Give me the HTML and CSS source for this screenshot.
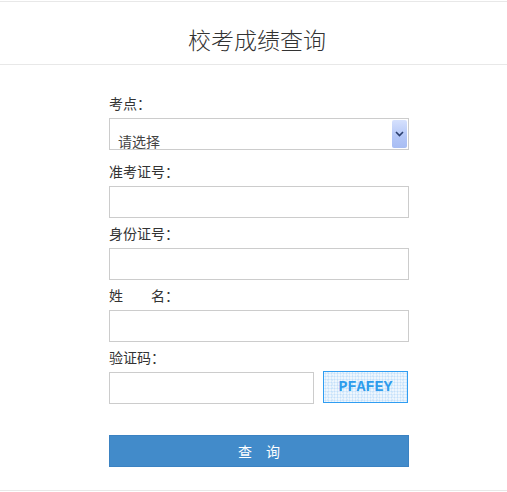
FILE: index.html
```html
<!DOCTYPE html>
<html lang="zh-CN">
<head>
<meta charset="utf-8">
<title>校考成绩查询</title>
<link rel="stylesheet" href="styles.css">
</head>
<body>
<div class="page">
  <header class="top">
    <h1 class="title">校考成绩查询</h1>
  </header>
  <form class="form">
    <label class="label">考点：</label>
    <div class="select-wrap">
      <select class="select"><option>请选择</option></select>
      <span class="select-btn">
        <svg width="9" height="6" viewBox="0 0 9 6"><path d="M1 1 L4.5 4.5 L8 1" fill="none" stroke="#2b3f6e" stroke-width="1.6"/></svg>
      </span>
    </div>
    <label class="label">准考证号：</label>
    <input class="input" type="text">
    <label class="label">身份证号：</label>
    <input class="input" type="text">
    <label class="label">姓　　名：</label>
    <input class="input" type="text">
    <label class="label">验证码：</label>
    <div class="captcha-row">
      <input class="input input-captcha" type="text">
      <div class="captcha">PFAFEY</div>
    </div>
    <button class="submit" type="button">查　询</button>
  </form>
  <footer class="bottom"></footer>
</div>
</body>
</html>
```
FILE: styles.css
```css
html, body {
  margin: 0;
  padding: 0;
  background: #fff;
}
body {
  font-family: "Noto Sans CJK SC", "Noto Sans", sans-serif;
  color: #333;
  font-size: 14px;
}
.page {
  margin-top: 1px;
  border-top: 1px solid #e8e8e8;
}
.top {
  height: 63px;
  box-sizing: border-box;
  border-bottom: 1px solid #e8e8e8;
  text-align: center;
  padding-left: 7px;
  padding-top: 24px;
}
.title {
  margin: 0;
  font-size: 23px;
  font-weight: 300;
  line-height: 26px;
  color: #333;
}
.form {
  width: 300px;
  margin-left: 109px;
  padding-top: 23px;
}
.label {
  display: block;
  height: 30px;
  line-height: 30px;
  font-size: 14px;
  color: #333;
}
.select-wrap {
  position: relative;
  height: 32px;
  margin-bottom: 6px;
}
.select {
  -webkit-appearance: none;
  appearance: none;
  display: block;
  width: 300px;
  height: 32px;
  box-sizing: border-box;
  border: 1px solid #ccc;
  border-radius: 0;
  background: #fff;
  padding: 12px 0 0 8px;
  font-family: inherit;
  font-size: 14px;
  color: #444;
  outline: none;
}
.select-btn {
  position: absolute;
  right: 2px;
  top: 2px;
  width: 15px;
  height: 28px;
  border-radius: 2px;
  background: linear-gradient(#d6e1fd, #b3c6f7 60%, #a8bdf3);
  display: flex;
  align-items: center;
  justify-content: center;
  pointer-events: none;
}
.input {
  display: block;
  width: 300px;
  height: 32px;
  box-sizing: border-box;
  border: 1px solid #ccc;
  margin: 0;
  padding: 0 8px;
  font-family: inherit;
  font-size: 14px;
  outline: none;
}
.captcha-row {
  display: flex;
  justify-content: space-between;
  align-items: flex-start;
}
.input-captcha {
  width: 205px;
}
.captcha {
  width: 85px;
  height: 32px;
  box-sizing: border-box;
  margin-top: -1px;
  margin-right: 1px;
  border: 1px solid #2f9df2;
  background-color: #eef6fd;
  background-image:
    radial-gradient(circle, #c4e0f9 0.9px, transparent 1.1px),
    radial-gradient(circle, #d6eafb 0.9px, transparent 1.1px);
  background-size: 3px 3px, 5px 4px;
  background-position: 0 0, 1px 2px;
  display: flex;
  align-items: center;
  justify-content: center;
  font-family: "Liberation Mono", "DejaVu Sans Mono", monospace;
  font-weight: bold;
  font-size: 15px;
  color: #2e9cec;
}
.submit {
  display: block;
  margin-top: 31px;
  width: 300px;
  height: 32px;
  box-sizing: border-box;
  border: 1px solid #3b82c2;
  background: #428bca;
  color: #fff;
  font-family: inherit;
  font-size: 14px;
  padding: 0;
  cursor: pointer;
}
.bottom {
  margin-top: 23px;
  border-top: 1px solid #e8e8e8;
}
```
